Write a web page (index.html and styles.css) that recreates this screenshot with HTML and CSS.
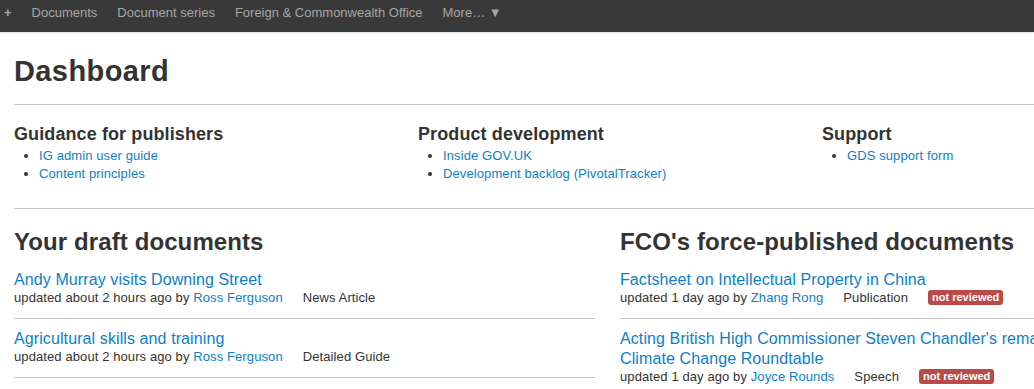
FILE: index.html
```html
<!DOCTYPE html>
<html lang="en">
<head>
  <meta charset="utf-8" />
  <title>Dashboard</title>
  <link rel="stylesheet" href="styles.css">
</head>

<body>
  <!-- Top bar -->
  <header class="topbar">
    <nav class="topbar-nav">
      <a href="#" class="new">+</a>
      <a href="#">Documents</a>
      <a href="#">Document series</a>
      <a href="#">Foreign &amp; Commonwealth Office</a>
      <a href="#">More… <span class="caret">&#9660;</span></a>
    </nav>
  </header>

  <main class="container">
    <h1>Dashboard</h1>

    <section class="row links">
      <div class="span4">
        <h3>Guidance for publishers</h3>
        <ul>
          <li><a href="#">IG admin user guide</a></li>
          <li><a href="#">Content principles</a></li>
        </ul>
      </div>
      <div class="span4">
        <h3>Product development</h3>
        <ul>
          <li><a href="#">Inside GOV.UK</a></li>
          <li><a href="#">Development backlog (PivotalTracker)</a></li>
        </ul>
      </div>
      <div class="span4">
        <h3>Support</h3>
        <ul>
          <li><a href="#">GDS support form</a></li>
        </ul>
      </div>
    </section>

    <section class="row docs">
      <div class="span6">
        <h2>Your draft documents</h2>
        <ul class="doc-list">
          <li>
            <a href="#" class="doc-title">Andy Murray visits Downing Street</a>
            <div class="meta"><span>updated about 2 hours ago by <a href="#">Ross Ferguson</a></span><span class="type">News Article</span></div>
          </li>
          <li>
            <a href="#" class="doc-title">Agricultural skills and training</a>
            <div class="meta"><span>updated about 2 hours ago by <a href="#">Ross Ferguson</a></span><span class="type">Detailed Guide</span></div>
          </li>
        </ul>
      </div>
      <div class="span6">
        <h2>FCO's force-published documents</h2>
        <ul class="doc-list">
          <li>
            <a href="#" class="doc-title">Factsheet on Intellectual Property in China</a>
            <div class="meta"><span>updated 1 day ago by <a href="#">Zhang Rong</a></span><span class="type">Publication</span><span class="badge">not reviewed</span></div>
          </li>
          <li>
            <a href="#" class="doc-title">Acting British High Commissioner Steven Chandler's remarks at the UK-China Climate Change Roundtable</a>
            <div class="meta"><span>updated 1 day ago by <a href="#">Joyce Rounds</a></span><span class="type">Speech</span><span class="badge">not reviewed</span></div>
          </li>
        </ul>
      </div>
    </section>
  </main>
</body>
</html>
```

FILE: styles.css
```css
* {
  margin: 0;
  padding: 0;
  box-sizing: border-box;
}

html {
  overflow: hidden;
}

body {
  font-family: "Liberation Sans", Arial, sans-serif;
  font-size: 13px;
  line-height: 18px;
  letter-spacing: 0.1px;
  color: #333;
  background: #fff;
}

a {
  color: #0b7fcb;
  text-decoration: none;
}

/* Top bar */
.topbar {
  height: 32px;
  background: #393939;
  box-shadow: 0 1px 2px rgba(0,0,0,0.15);
}
.topbar-nav {
  display: flex;
  padding-left: 4px;
}
.topbar-nav a {
  color: #a6a6a6;
  line-height: 26px;
  letter-spacing: 0;
  padding: 0 10px;
}
.topbar-nav a.new {
  padding-left: 0;
  font-weight: bold;
}
.topbar-nav .caret {
  font-size: 13px;
}

/* Page */
.container {
  width: 1187px;
  margin-left: 14px;
}

h1 {
  font-size: 29px;
  line-height: 36px;
  font-weight: bold;
  letter-spacing: 0.4px;
  margin: 21px 0 15px;
}

.row {
  display: grid;
  grid-template-columns: repeat(12, 76px);
  column-gap: 25px;
  border-top: 1px solid #c8c8c8;
}
.span4 {
  grid-column: span 4;
}
.span6 {
  grid-column: span 6;
}

/* Useful links */
.links {
  padding: 19px 0 25px;
}
.links h3 {
  font-size: 18px;
  line-height: 20px;
  margin-bottom: 3px;
}
.links ul {
  margin-left: 25px;
}

/* Document lists */
.docs {
  padding-top: 18px;
}
.docs h2 {
  font-size: 24px;
  line-height: 30px;
  margin-bottom: 3px;
}
.doc-list {
  list-style: none;
}
.doc-list li {
  padding: 10px 0 12px;
  border-bottom: 1px solid #c8c8c8;
}
.doc-title {
  display: block;
  font-size: 16px;
  line-height: 20px;
  letter-spacing: 0.1px;
}
.meta {
  line-height: 16px;
}
.meta .type {
  margin-left: 20px;
}
.badge {
  margin-left: 20px;
  display: inline-block;
  background: #b94a48;
  color: #fff;
  font-size: 11px;
  font-weight: bold;
  line-height: 14px;
  letter-spacing: 0;
  padding: 0 4px 1px;
  border-radius: 3px;
  vertical-align: 1px;
}
```
